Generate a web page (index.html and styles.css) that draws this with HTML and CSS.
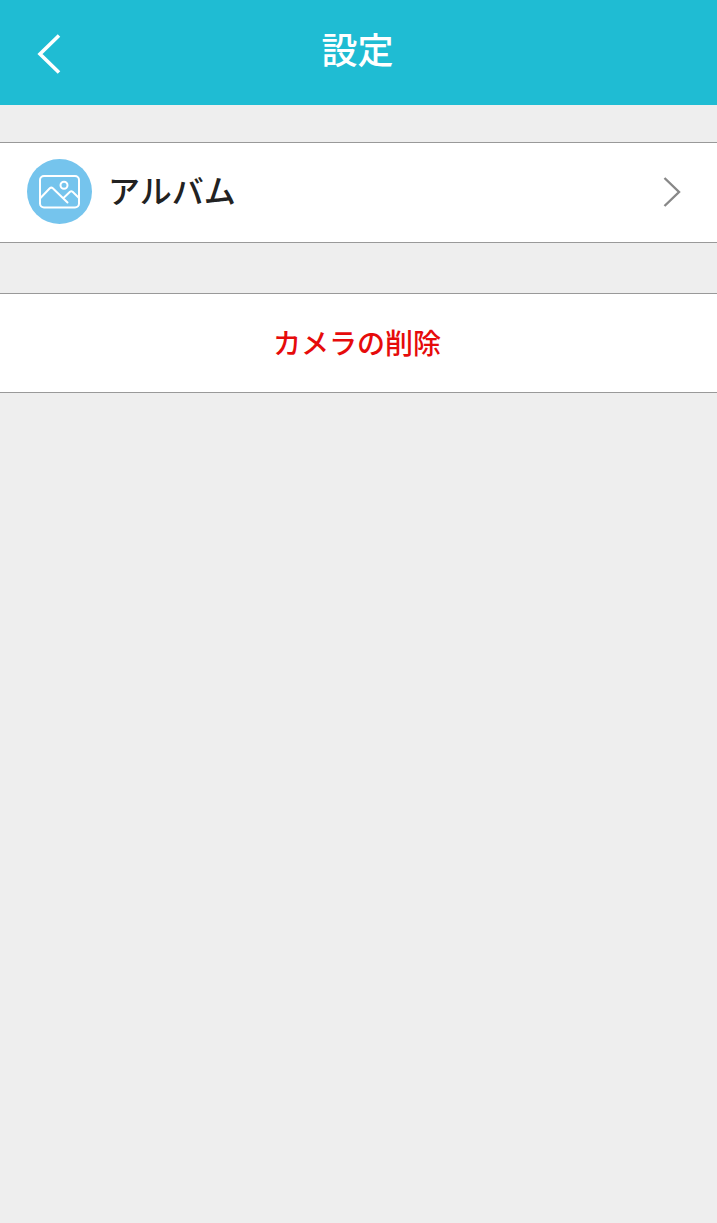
FILE: index.html
```html
<!DOCTYPE html>
<html lang="ja">
<head>
<meta charset="utf-8">
<title>設定</title>
<link rel="stylesheet" href="styles.css">
</head>
<body>
<header class="topbar">
  <button class="back" aria-label="戻る">
    <svg width="24" height="42" viewBox="0 0 24 42"><path d="M22 2.500L3 21L22 39.500"/></svg>
  </button>
  <h1 class="title">設定</h1>
</header>
<main class="settings">
  <a class="row album">
    <svg class="album-icon" width="65" height="65" viewBox="0 0 65 65">
      <circle class="disc" cx="32.500" cy="32.500" r="32.500"/>
      <rect x="13" y="17" width="39" height="31.500" rx="4"/>
      <path d="M13 39.500L22.800 29.300Q24.300 28 25.800 29.300L40.500 43.500M37 38.500L43 32.800Q44.300 31.800 45.600 32.800L52 39"/>
      <circle cx="37" cy="26.300" r="3.500"/>
    </svg>
    <span class="label">アルバム</span>
    <svg class="chevron" width="18" height="32" viewBox="0 0 18 32"><path d="M1.500 2L16 16L1.500 30"/></svg>
  </a>
  <button class="row delete"><span class="delete-text">カメラの削除</span></button>
</main>
</body>
</html>
```
FILE: styles.css
```css
body {
  margin: 0;
  min-height: 100vh;
  background: #eee;
  font-family: "Noto Sans CJK JP", sans-serif;
}

svg {
  fill: none;
  stroke: #fff;
  stroke-width: 2;
  stroke-linejoin: round;
  stroke-linecap: round;
  flex: none;
}

button {
  border: 0;
  padding: 0;
  background: none;
  font: inherit;
}

.topbar {
  display: grid;
  grid-template-columns: 100px 1fr 100px;
  height: 105px;
  background: #1fbcd3;
}

.back {
  display: flex;
  align-items: flex-start;
  padding: 33px 0 0 37px;
}

.back svg {
  stroke-width: 3.6;
  stroke-linejoin: miter;
  stroke-linecap: butt;
}

.title {
  margin: 0 0 0 -2px;
  color: #fff;
  font-size: 36px;
  font-weight: 500;
  line-height: 97px;
  text-align: center;
}

.settings {
  display: flex;
  flex-direction: column;
  gap: 50px;
  padding-top: 37px;
}

.row {
  box-sizing: border-box;
  display: flex;
  align-items: center;
  width: 100%;
  border: solid #999;
  border-width: 1px 0;
  background: #fff;
}

.album {
  height: 101px;
  padding: 0 36px 2px 27px;
}

.album .disc {
  fill: #75c4ed;
  stroke: none;
}

.label {
  flex: 1;
  margin-left: 16px;
  padding-bottom: 5px;
  color: #222;
  font-size: 32px;
  font-weight: 500;
  line-height: 48px;
}

.album .chevron {
  stroke: #888;
  stroke-width: 2.4;
  stroke-linejoin: miter;
  stroke-linecap: butt;
}

.delete {
  justify-content: center;
  height: 100px;
  padding: 0 3px 2px 0;
  color: #e60b0b;
  font-size: 28px;
  font-weight: 500;
  line-height: 42px;
}
```
